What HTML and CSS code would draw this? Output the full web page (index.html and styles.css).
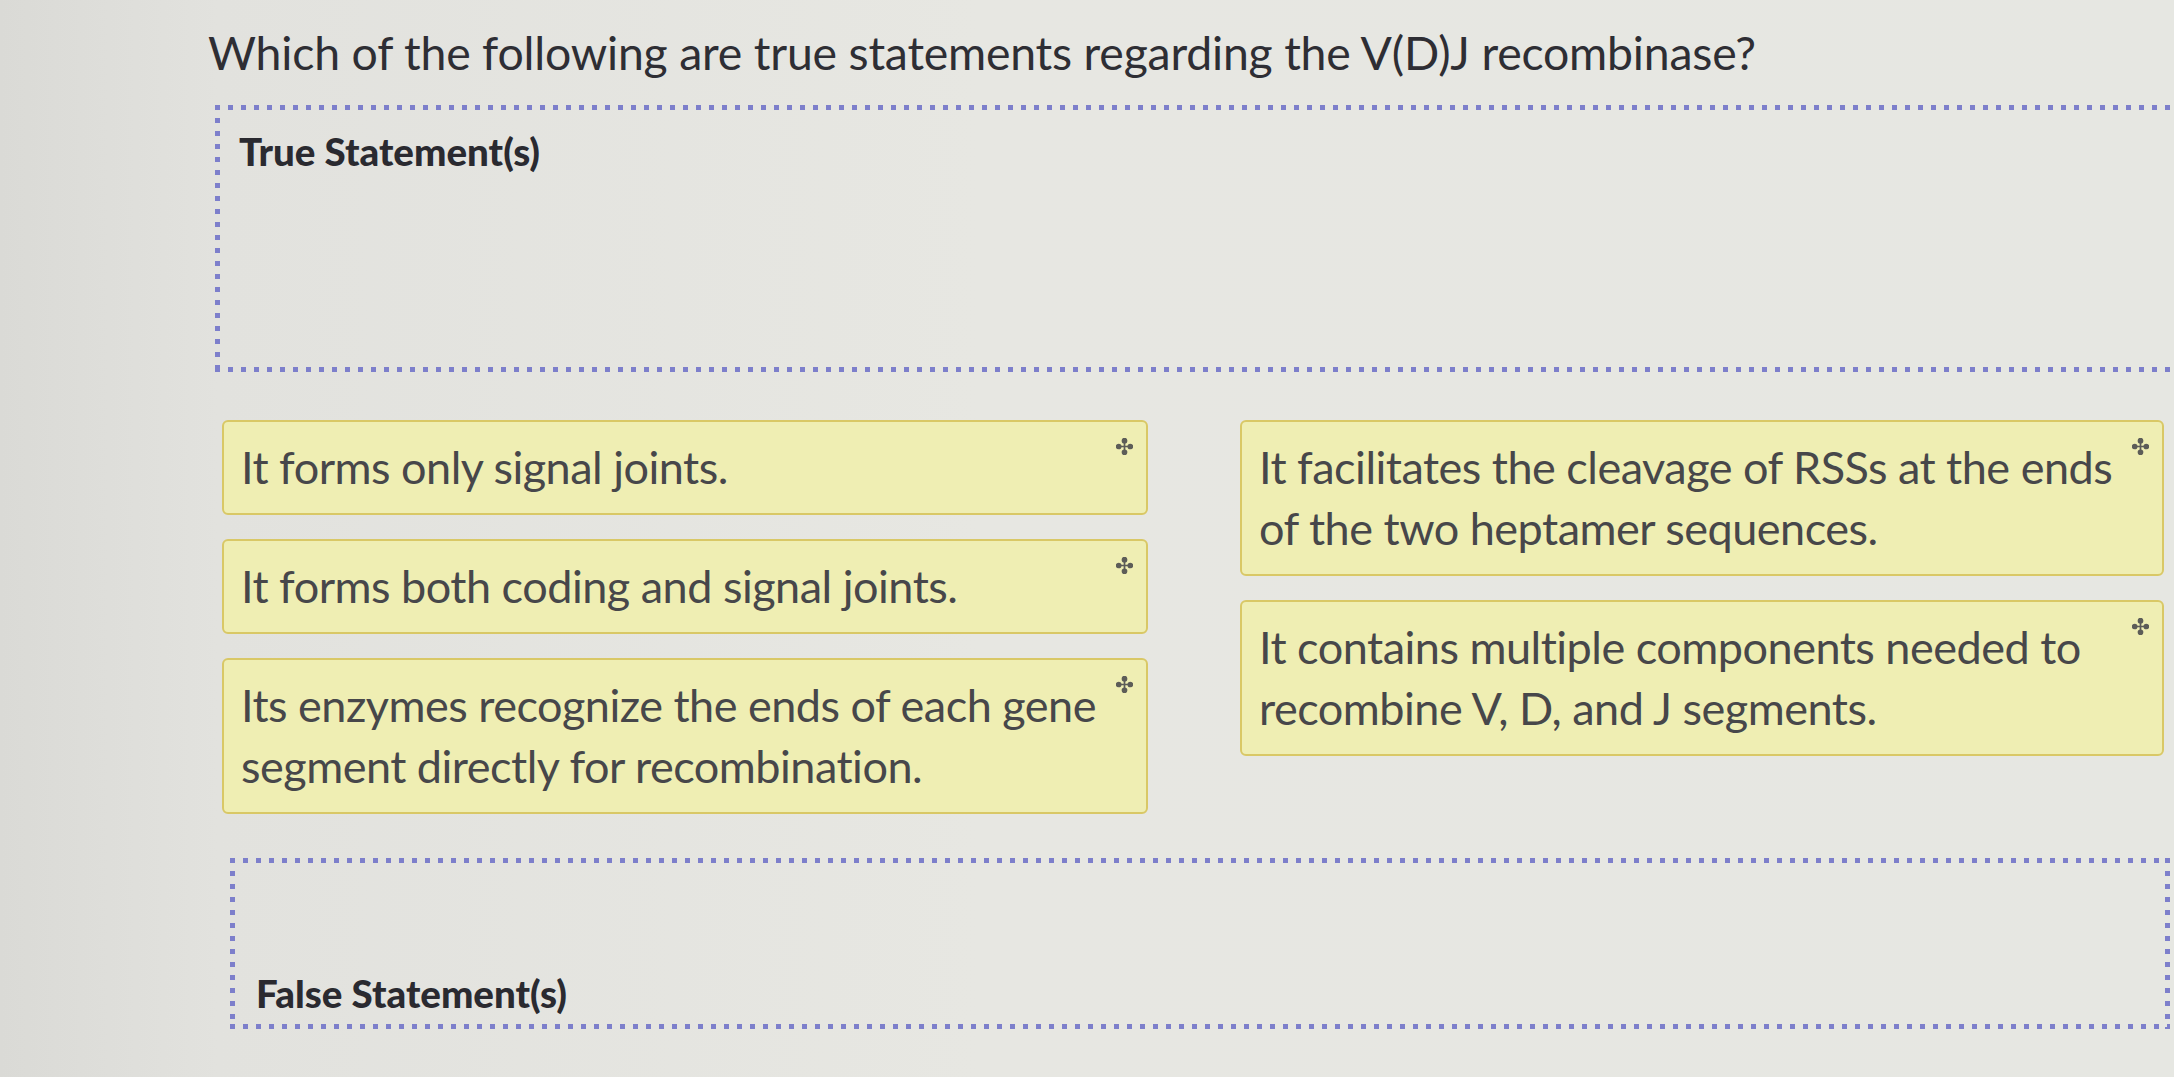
FILE: index.html
```html
<!DOCTYPE html>
<html lang="en">
<head>
<meta charset="utf-8">
<title>V(D)J recombinase</title>
<link rel="stylesheet" href="styles.css">
</head>
<body>
<main class="page">
  <h1 class="question">Which of the following are true statements regarding the V(D)J recombinase?</h1>

  <section class="dropzone zone-true">
    <h2 class="zone-title">True Statement(s)</h2>
  </section>

  <div class="bank">
    <div class="bank-col">
      <div class="card"><p class="card-text">It forms only signal joints.</p><svg class="move" viewBox="0 0 16 16"><path d="M8 2.5v11M2.5 8h11"/><circle cx="8" cy="2.5" r="1.9"/><circle cx="8" cy="13.5" r="1.9"/><circle cx="2.5" cy="8" r="1.9"/><circle cx="13.5" cy="8" r="1.9"/></svg></div>
      <div class="card"><p class="card-text">It forms both coding and signal joints.</p><svg class="move" viewBox="0 0 16 16"><path d="M8 2.5v11M2.5 8h11"/><circle cx="8" cy="2.5" r="1.9"/><circle cx="8" cy="13.5" r="1.9"/><circle cx="2.5" cy="8" r="1.9"/><circle cx="13.5" cy="8" r="1.9"/></svg></div>
      <div class="card"><p class="card-text">Its enzymes recognize the ends of each gene segment directly for recombination.</p><svg class="move" viewBox="0 0 16 16"><path d="M8 2.5v11M2.5 8h11"/><circle cx="8" cy="2.5" r="1.9"/><circle cx="8" cy="13.5" r="1.9"/><circle cx="2.5" cy="8" r="1.9"/><circle cx="13.5" cy="8" r="1.9"/></svg></div>
    </div>
    <div class="bank-col">
      <div class="card"><p class="card-text">It facilitates the cleavage of RSSs at the ends of the two heptamer sequences.</p><svg class="move" viewBox="0 0 16 16"><path d="M8 2.5v11M2.5 8h11"/><circle cx="8" cy="2.5" r="1.9"/><circle cx="8" cy="13.5" r="1.9"/><circle cx="2.5" cy="8" r="1.9"/><circle cx="13.5" cy="8" r="1.9"/></svg></div>
      <div class="card"><p class="card-text">It contains multiple components needed to recombine V, D, and J segments.</p><svg class="move" viewBox="0 0 16 16"><path d="M8 2.5v11M2.5 8h11"/><circle cx="8" cy="2.5" r="1.9"/><circle cx="8" cy="13.5" r="1.9"/><circle cx="2.5" cy="8" r="1.9"/><circle cx="13.5" cy="8" r="1.9"/></svg></div>
    </div>
  </div>

  <section class="dropzone zone-false">
    <h2 class="zone-title">False Statement(s)</h2>
  </section>
</main>
</body>
</html>
```

FILE: styles.css
```css
html, body {
  margin: 0;
  padding: 0;
}
body {
  width: 2174px;
  height: 1077px;
  overflow: hidden;
  background: linear-gradient(90deg, #dadad6 0%, #e2e2de 10%, #e7e7e2 45%, #e6e7e2 100%);
  font-family: Lato, "Open Sans", "Noto Sans", sans-serif;
  color: #333;
}
.page {
  padding: 24px 0 0 208px;
  display: flex;
  flex-direction: column;
}
.question {
  margin: 0;
  font-size: 46.4px;
  line-height: 56px;
  font-weight: 400;
  color: #2e2e34;
  letter-spacing: -0.2px;
}
.dropzone {
  box-sizing: border-box;
  display: flex;
  flex-direction: column;
  background:
    linear-gradient(90deg, #7d7fcb 5px, transparent 5px) left top / 13px 5px repeat-x,
    linear-gradient(90deg, #7d7fcb 5px, transparent 5px) left bottom / 13px 5px repeat-x,
    linear-gradient(180deg, #7d7fcb 5px, transparent 5px) left top / 5px 13px repeat-y,
    linear-gradient(180deg, #7d7fcb 5px, transparent 5px) right top / 5px 13px repeat-y;
}
.zone-title {
  margin: 0;
  font-size: 38.5px;
  line-height: 40px;
  font-weight: 900;
  color: #2a2a30;
}
.zone-true {
  margin: 25px -20px 0 7px;
  height: 267px;
  padding: 26px 24px;
}
.bank {
  margin: 48px 0 0 14px;
  display: grid;
  grid-template-columns: 926px 924px;
  column-gap: 92px;
  align-items: start;
}
.bank-col {
  display: flex;
  flex-direction: column;
  gap: 24px;
}
.card {
  position: relative;
  background: #efeeb3;
  border: 2px solid #d9c866;
  border-radius: 6px;
  padding: 15px 26px 15px 17px;
}
.card-text {
  margin: 0;
  font-size: 45px;
  line-height: 61px;
  color: #47474a;
  letter-spacing: -0.5px;
}
.move {
  position: absolute;
  top: 16px;
  right: 13px;
  width: 17px;
  height: 17px;
  fill: #5d5d58;
  stroke: #5d5d58;
  stroke-width: 1.6;
}
.zone-false {
  margin: 44px 4px 0 22px;
  height: 171px;
  justify-content: flex-end;
  padding: 0 26px 16px;
}
```
